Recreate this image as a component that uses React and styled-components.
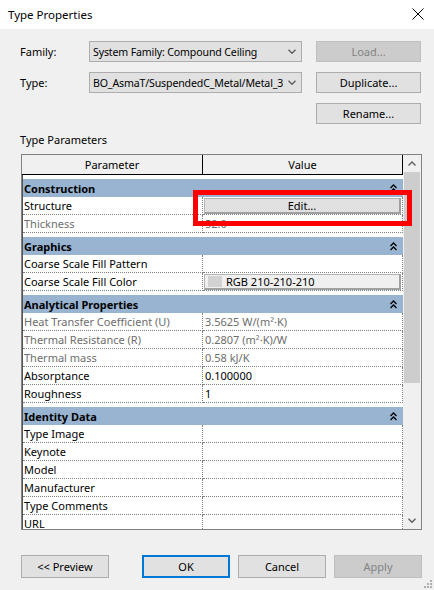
import React from "react";
import styled, { createGlobalStyle } from "styled-components";

const Global = createGlobalStyle`
  html, body { margin: 0; padding: 0; background: #f0f0f0; }
  body { font-family: "Noto Sans", "Open Sans", sans-serif; font-size: 11px; color: #000; }
  * { box-sizing: border-box; }
`;

const Dialog = styled.div`
  position: relative;
  width: 434px;
  height: 590px;
  background: #f0f0f0;
  display: flex;
  flex-direction: column;
  overflow: hidden;
`;

const TitleBar = styled.div`
  height: 29px;
  background: #fff;
  display: flex;
  align-items: center;
  justify-content: space-between;
  padding: 0 10px 1px 8px;
  font-size: 11.5px;
`;

const TopGrid = styled.div`
  display: grid;
  grid-template-columns: 55px 213px 105px;
  grid-auto-rows: 21px;
  column-gap: 14px;
  row-gap: 10px;
  margin: 12px 0 0 20px;
`;

const FieldLabel = styled.div`
  align-self: center;
`;

const Combo = styled.div`
  border: 1px solid #adadad;
  background: #e1e1e1;
  display: flex;
  align-items: center;
  justify-content: space-between;
  gap: 4px;
  padding: 0 5px 0 3px;
  white-space: nowrap;
  overflow: hidden;
`;

const ComboText = styled.span`
  font-size: 10.6px;
  letter-spacing: -0.15px;
  overflow: hidden;
`;

const DialogButton = styled.div`
  grid-column: ${(p) => p.$col || "auto"};
  display: flex;
  align-items: center;
  justify-content: center;
  width: ${(p) => (p.$w ? p.$w + "px" : "auto")};
  height: ${(p) => (p.$h ? p.$h + "px" : "auto")};
  margin-left: ${(p) => (p.$ml ? p.$ml + "px" : "0")};
  background: ${(p) => (p.$disabled ? "#cccccc" : "#e1e1e1")};
  border: ${(p) => (p.$primary ? "2px solid #0078d7" : p.$disabled ? "1px solid #bfbfbf" : "1px solid #adadad")};
  color: ${(p) => (p.$disabled ? "#838383" : "#000")};
`;

const SectionLabel = styled.div`
  margin: 8px 0 6px 20px;
  line-height: 16px;
`;

const Table = styled.div`
  position: relative;
  margin-left: 21px;
  width: 401px;
  height: 376px;
  border: 1px solid #828282;
  background: #fff;
  display: flex;
`;

const GridArea = styled.div`
  width: 381px;
  display: flex;
  flex-direction: column;
  overflow: hidden;
`;

const HeaderRow = styled.div`
  display: grid;
  grid-template-columns: 181px 200px;
  height: 20px;
  flex: none;
`;

const HeaderCell = styled.div`
  background: #f0f0f0;
  border-right: 1px solid #000;
  border-bottom: 1px solid #000;
  display: flex;
  align-items: center;
  justify-content: center;
`;

const Body = styled.div`
  flex: 1;
  overflow: hidden;
  border-left: 1px solid #555;
`;

const Group = styled.div`
  padding-top: 4px;
`;

const GroupBand = styled.div`
  height: 18px;
  background: #99b4d1;
  display: flex;
  align-items: center;
  justify-content: space-between;
  padding: 0 6px 0 1px;
  font-weight: bold;
`;

const Row = styled.div`
  display: grid;
  grid-template-columns: 180px 200px;
  height: 18px;
`;

const Cell = styled.div`
  border-right: 1px dotted #808080;
  border-bottom: 1px dotted #808080;
  padding-left: ${(p) => (p.$value ? "2px" : "1px")};
  color: ${(p) => (p.$muted ? "#6d6d6d" : "#000")};
  line-height: 17px;
  white-space: nowrap;
  overflow: hidden;
  display: flex;
  align-items: center;
`;

const CellButton = styled.div`
  margin: 1px 0 0 -1px;
  width: 197px;
  height: 16px;
  background: ${(p) => (p.$light ? "#f0f0f0" : "#e1e1e1")};
  border: 1px solid #b4b4b4;
  border-right: 2px solid #a0a0a0;
  border-bottom: 2px solid #a0a0a0;
  display: flex;
  align-items: center;
  justify-content: ${(p) => (p.$left ? "flex-start" : "center")};
  padding-left: ${(p) => (p.$left ? "3px" : "0")};
  gap: 4px;
  color: #000;
`;

const Swatch = styled.span`
  width: 14px;
  height: 11px;
  background: #d2d2d2;
  flex: none;
`;

const Scrollbar = styled.div`
  width: 18px;
  background: #f0f0f0;
  display: flex;
  flex-direction: column;
`;

const ArrowBox = styled.div`
  height: 17px;
  flex: none;
  display: flex;
  align-items: center;
  justify-content: center;
`;

const Thumb = styled.div`
  height: 211px;
  margin: 0 1px;
  background: #cdcdcd;
  flex: none;
`;

const Spacer = styled.div`
  flex: 1;
`;

const Annotation = styled.div`
  position: absolute;
  left: 171px;
  top: 35px;
  width: 219px;
  height: 36px;
  border: 5px solid #ff0000;
  pointer-events: none;
`;

const Footer = styled.div`
  display: flex;
  margin: 25px 0 0 21px;
`;

const Grip = styled.svg`
  position: absolute;
  right: 2px;
  bottom: 2px;
`;

const Chevron = ({ up }) => (
  <svg width="8" height="5" viewBox="0 0 8 5" style={{ flex: "none" }}>
    <path d={up ? "M0.5 4.5 L4 1 L7.5 4.5" : "M0.5 0.8 L4 4.3 L7.5 0.8"} fill="none" stroke="#606060" strokeWidth="1.4" />
  </svg>
);

const DoubleUp = () => (
  <svg width="7" height="9" viewBox="0 0 7 9">
    <path d="M0.5 4 L3.5 1 L6.5 4 M0.5 8 L3.5 5 L6.5 8" fill="none" stroke="#000" strokeWidth="1.3" />
  </svg>
);

const groups = [
  {
    name: "Construction",
    rows: [
      { p: "Structure", edit: true },
      { p: "Thickness", v: "52.0", muted: true },
    ],
  },
  {
    name: "Graphics",
    rows: [
      { p: "Coarse Scale Fill Pattern", v: "" },
      { p: "Coarse Scale Fill Color", color: "RGB 210-210-210" },
    ],
  },
  {
    name: "Analytical Properties",
    rows: [
      { p: "Heat Transfer Coefficient (U)", v: "3.5625 W/(m²·K)", muted: true },
      { p: "Thermal Resistance (R)", v: "0.2807 (m²·K)/W", muted: true },
      { p: "Thermal mass", v: "0.58 kJ/K", muted: true },
      { p: "Absorptance", v: "0.100000" },
      { p: "Roughness", v: "1" },
    ],
  },
  {
    name: "Identity Data",
    rows: [
      { p: "Type Image", v: "" },
      { p: "Keynote", v: "" },
      { p: "Model", v: "" },
      { p: "Manufacturer", v: "" },
      { p: "Type Comments", v: "" },
      { p: "URL", v: "" },
    ],
  },
];

export default function App() {
  return (
    <>
      <Global />
      <Dialog>
        <TitleBar>
          <span>Type Properties</span>
          <svg width="12" height="12" viewBox="0 0 12 12">
            <path d="M0.5 0.5 L11.5 11.5 M11.5 0.5 L0.5 11.5" stroke="#000" strokeWidth="1" />
          </svg>
        </TitleBar>
        <TopGrid>
          <FieldLabel>Family:</FieldLabel>
          <Combo>
            <ComboText>System Family: Compound Ceiling</ComboText>
            <Chevron />
          </Combo>
          <DialogButton $disabled>Load...</DialogButton>
          <FieldLabel>Type:</FieldLabel>
          <Combo>
            <ComboText>BO_AsmaT/SuspendedC_Metal/Metal_3</ComboText>
            <Chevron />
          </Combo>
          <DialogButton>Duplicate...</DialogButton>
          <DialogButton $col={3}>Rename...</DialogButton>
        </TopGrid>
        <SectionLabel>Type Parameters</SectionLabel>
        <Table>
          <GridArea>
            <HeaderRow>
              <HeaderCell>Parameter</HeaderCell>
              <HeaderCell>Value</HeaderCell>
            </HeaderRow>
            <Body>
              {groups.map((g) => (
                <Group key={g.name}>
                  <GroupBand>
                    <span>{g.name}</span>
                    <DoubleUp />
                  </GroupBand>
                  {g.rows.map((r) => (
                    <Row key={r.p}>
                      <Cell $muted={r.muted}>{r.p}</Cell>
                      <Cell $value $muted={r.muted}>
                        {r.edit ? (
                          <CellButton>Edit...</CellButton>
                        ) : r.color ? (
                          <CellButton $light $left>
                            <Swatch />
                            {r.color}
                          </CellButton>
                        ) : (
                          r.v
                        )}
                      </Cell>
                    </Row>
                  ))}
                </Group>
              ))}
            </Body>
          </GridArea>
          <Scrollbar>
            <ArrowBox>
              <Chevron up />
            </ArrowBox>
            <Thumb />
            <Spacer />
            <ArrowBox>
              <Chevron />
            </ArrowBox>
          </Scrollbar>
          <Annotation />
        </Table>
        <Footer>
          <DialogButton $w={88} $h={23}>&lt;&lt; Preview</DialogButton>
          <DialogButton $w={88} $h={23} $ml={33} $primary>OK</DialogButton>
          <DialogButton $w={88} $h={23} $ml={8}>Cancel</DialogButton>
          <DialogButton $w={88} $h={23} $ml={8} $disabled>Apply</DialogButton>
        </Footer>
        <Grip width="8" height="8" viewBox="0 0 8 8">
          <g fill="#b0b0b0">
            <rect x="6" y="0" width="2" height="2" />
            <rect x="3" y="3" width="2" height="2" />
            <rect x="6" y="3" width="2" height="2" />
            <rect x="0" y="6" width="2" height="2" />
            <rect x="3" y="6" width="2" height="2" />
            <rect x="6" y="6" width="2" height="2" />
          </g>
        </Grip>
      </Dialog>
    </>
  );
}
